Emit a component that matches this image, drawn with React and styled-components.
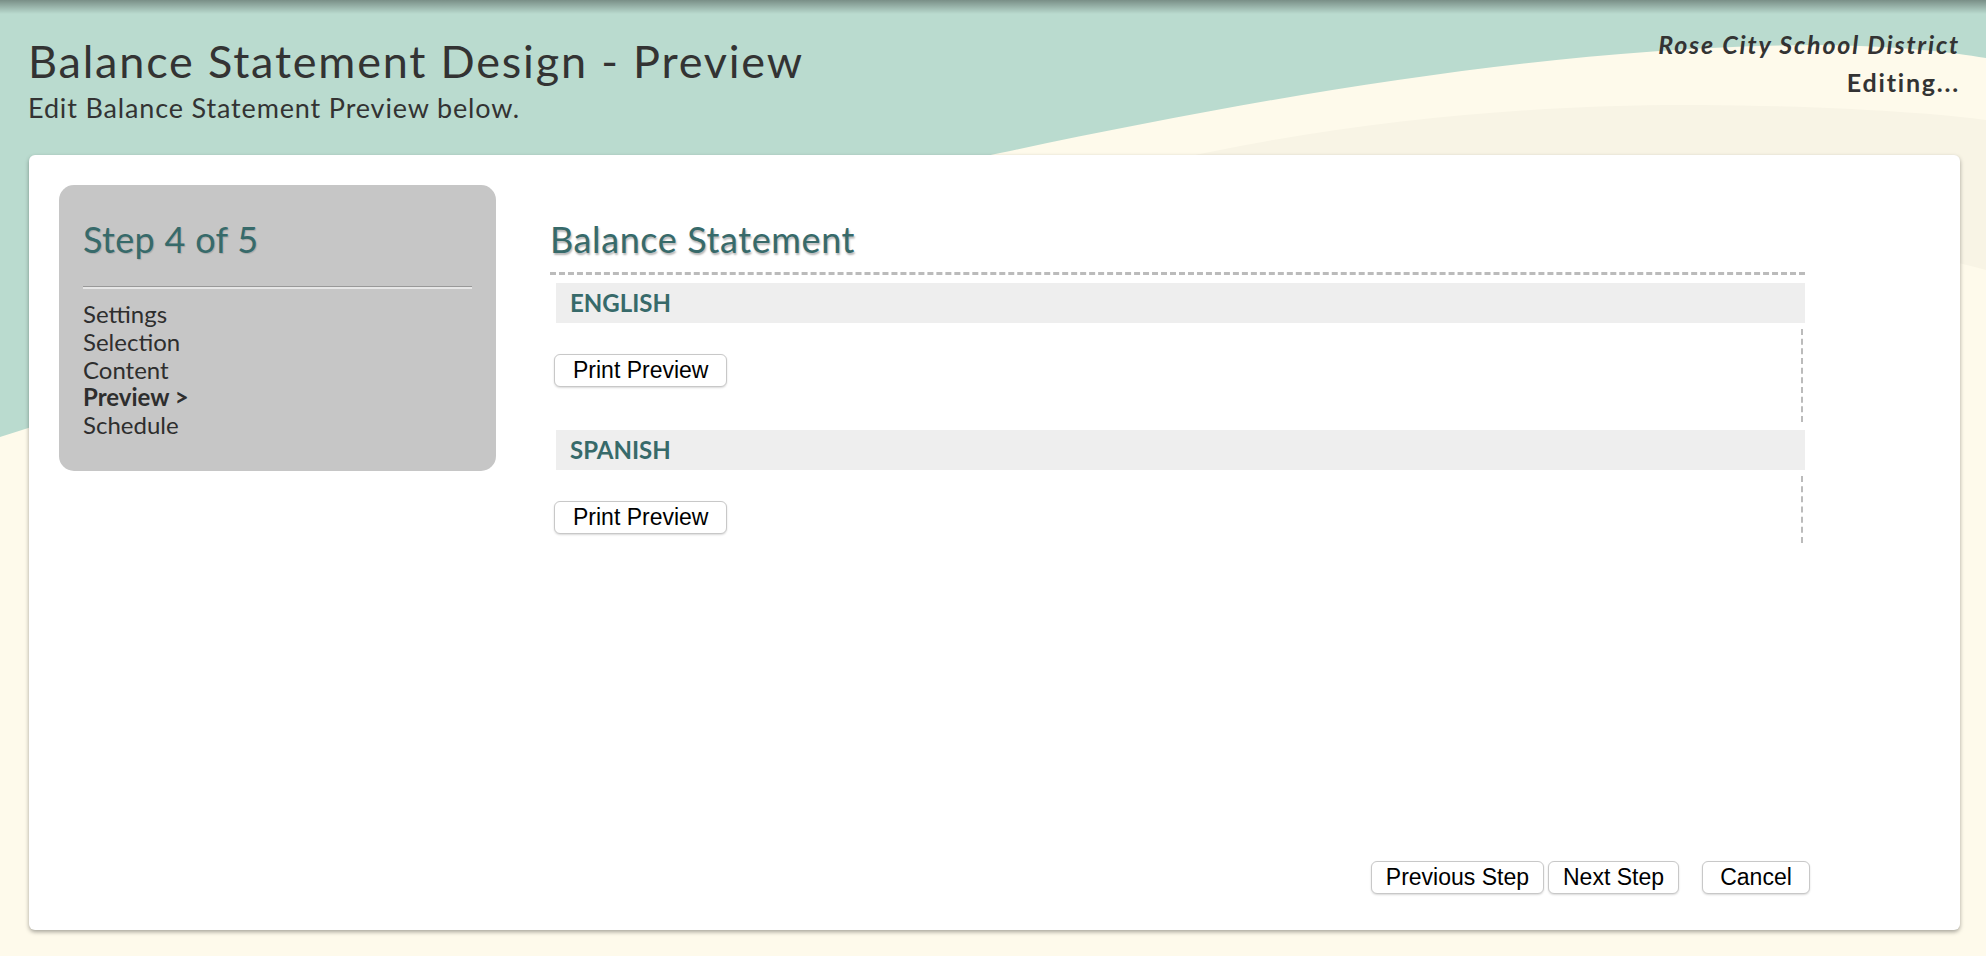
import React from 'react';
import styled, { createGlobalStyle } from 'styled-components';

const GlobalStyle = createGlobalStyle`
  html, body {
    margin: 0;
    padding: 0;
    background: #fefaeb;
  }
  * {
    box-sizing: border-box;
  }
`;

const Page = styled.div`
  position: relative;
  width: 100%;
  height: 956px;
  overflow: hidden;
  font-family: Lato, "Open Sans", sans-serif;
  color: #333;
`;

const Backdrop = styled.svg`
  position: absolute;
  top: 0;
  left: 0;
  width: 1986px;
  height: 956px;
  z-index: 0;
`;

const Header = styled.header`
  position: relative;
  z-index: 1;
  display: flex;
  justify-content: space-between;
  align-items: flex-start;
  height: 155px;
  padding: 29px 26px 0 28px;
`;

const TitleBlock = styled.div`
  padding-top: 6px;
`;

const Title = styled.h1`
  margin: 0;
  font-size: 45px;
  line-height: 52px;
  letter-spacing: 1.8px;
  font-weight: 400;
  color: #333;
`;

const Subtitle = styled.div`
  margin-top: 5px;
  font-size: 27px;
  line-height: 32px;
  letter-spacing: 0.85px;
  color: #333;
`;

const District = styled.div`
  text-align: right;
  font-weight: 700;
  font-size: 25px;
  line-height: 30px;
  letter-spacing: 1.8px;
  color: #333;
`;

const DistrictName = styled.div`
  font-style: italic;
`;

const Status = styled.div`
  margin-top: 8px;
`;

const Card = styled.main`
  position: relative;
  z-index: 1;
  display: flex;
  flex-direction: column;
  height: 775px;
  margin: 0 26px 0 29px;
  background: #fff;
  border-radius: 6px;
  box-shadow: 0 2px 4px rgba(0, 0, 0, 0.35);
`;

const CardBody = styled.div`
  flex: 1;
  display: flex;
  align-items: flex-start;
  padding: 30px 0 0 30px;
`;

const StepPanel = styled.nav`
  width: 437px;
  padding: 33px 24px 32px;
  background: #c6c6c6;
  border-radius: 15px;
`;

const StepTitle = styled.h2`
  margin: 0;
  font-size: 36px;
  line-height: 42px;
  letter-spacing: 0.3px;
  font-weight: 400;
  color: #376a6a;
  text-shadow: 1px 1px 1px rgba(0, 0, 0, 0.15);
`;

const Divider = styled.hr`
  margin: 26px 0 0;
  height: 0;
  border: 0;
  border-top: 1px solid #999;
  border-bottom: 2px solid #e6e6e6;
`;

const StepList = styled.ul`
  list-style: none;
  margin: 11px 0 0;
  padding: 0;
`;

const StepItem = styled.li`
  font-size: 24px;
  line-height: 27.8px;
  color: #2e2e2e;
  font-weight: ${(p) => (p.$current ? 700 : 400)};
`;

const Content = styled.section`
  width: 1255px;
  margin-left: 54px;
  padding-top: 33px;
`;

const Heading = styled.h2`
  margin: 0;
  font-size: 36px;
  line-height: 42px;
  letter-spacing: 0.6px;
  font-weight: 400;
  color: #376a6a;
  text-shadow: 1px 2px 2px rgba(0, 0, 0, 0.3);
`;

const Statement = styled.div`
  margin-top: 12px;
  border-top: 3px dashed #bbb;
  padding-top: 8px;
`;

const Language = styled.div`
  & + & {
    margin-top: 8px;
  }
`;

const Band = styled.div`
  height: 40px;
  margin-left: 6px;
  padding-left: 14px;
  background: #eee;
  font-size: 24px;
  line-height: 40px;
  font-weight: 700;
  color: #376a6a;
`;

const BandBody = styled.div`
  margin: 6px 2px 0 0;
  padding: 25px 0 ${(p) => (p.$last ? '9px' : '35px')} 4px;
  border-right: 2px dashed #bbb;
`;

const Button = styled.button`
  height: 33px;
  padding: 0 ${(p) => p.$pad || 14}px;
  min-width: ${(p) => p.$minWidth || 0}px;
  font-family: "Liberation Sans", Arial, sans-serif;
  font-size: 23px;
  color: #000;
  background: #fff;
  border: 1px solid #c8c8c8;
  border-radius: 6px;
  box-shadow: 0 1px 2px rgba(0, 0, 0, 0.15);
  cursor: pointer;
`;

const Footer = styled.div`
  display: flex;
  justify-content: flex-end;
  align-items: center;
  padding: 0 150px 36px 0;
`;

const ButtonGap = styled.span`
  width: ${(p) => p.$w}px;
`;

const steps = ['Settings', 'Selection', 'Content', 'Preview >', 'Schedule'];
const languages = ['ENGLISH', 'SPANISH'];

const Background = () => (
  <Backdrop viewBox="0 0 1986 956" preserveAspectRatio="none">
    <defs>
      <linearGradient id="topShade" x1="0" y1="0" x2="0" y2="1">
        <stop offset="0" stopColor="#000" stopOpacity="0.35" />
        <stop offset="1" stopColor="#000" stopOpacity="0" />
      </linearGradient>
    </defs>
    <rect x="0" y="0" width="1986" height="956" fill="#fefaeb" />
    <path
      d="M1150 165 C1350 118 1550 104 1700 105 C1850 106 1950 115 1986 120 L1986 270 C1800 220 1500 195 1150 165 Z"
      fill="#f8f4e5"
    />
    <path
      d="M0 0 H1986 V58 C1950 52 1900 46 1816 45 C1550 46 1260 98 1000 153 C800 195 400 310 0 437 Z"
      fill="#badbcf"
    />
    <rect x="0" y="0" width="1986" height="14" fill="url(#topShade)" />
  </Backdrop>
);

const App = () => {
  return (
    <Page>
      <GlobalStyle />
      <Background />
      <Header>
        <TitleBlock>
          <Title>Balance Statement Design - Preview</Title>
          <Subtitle>Edit Balance Statement Preview below.</Subtitle>
        </TitleBlock>
        <District>
          <DistrictName>Rose City School District</DistrictName>
          <Status>Editing...</Status>
        </District>
      </Header>
      <Card>
        <CardBody>
          <StepPanel>
            <StepTitle>Step 4 of 5</StepTitle>
            <Divider />
            <StepList>
              {steps.map((s) => (
                <StepItem key={s} $current={s.startsWith('Preview')}>{s}</StepItem>
              ))}
            </StepList>
          </StepPanel>
          <Content>
            <Heading>Balance Statement</Heading>
            <Statement>
              {languages.map((lang, i) => (
                <Language key={lang}>
                  <Band>{lang}</Band>
                  <BandBody $last={i === languages.length - 1}>
                    <Button $pad={18}>Print Preview</Button>
                  </BandBody>
                </Language>
              ))}
            </Statement>
          </Content>
        </CardBody>
        <Footer>
          <Button>Previous Step</Button>
          <ButtonGap $w={4} />
          <Button>Next Step</Button>
          <ButtonGap $w={23} />
          <Button $minWidth={108}>Cancel</Button>
        </Footer>
      </Card>
    </Page>
  );
};

export default App;
